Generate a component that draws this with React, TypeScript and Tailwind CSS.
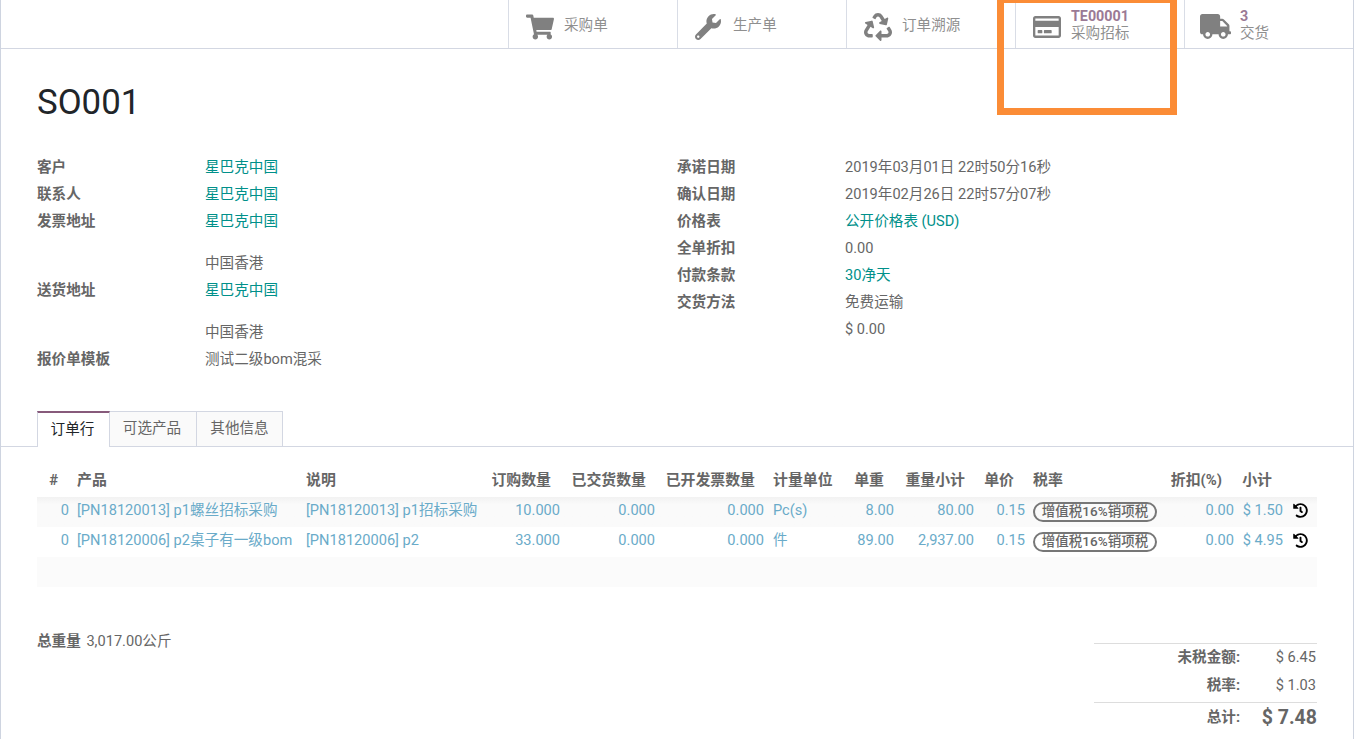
import { FaShoppingCart, FaWrench, FaRecycle, FaTruck, FaRegCreditCard, FaHistory } from "react-icons/fa";
import type { ReactNode } from "react";

const font = { fontFamily: 'Roboto, "Noto Sans CJK SC", sans-serif' };

function StatButton({ icon, label, top, className = "" }: { icon: ReactNode; label: string; top?: string; className?: string }) {
  return (
    <div className={"flex h-12 w-[169px] items-center border-l border-[#d9dde6] pl-[17px] text-[#8f8f8f] " + className}>
      <div className="flex w-[38px] shrink-0 items-center pt-[5px] text-[#808080]">{icon}</div>
      <div className={top ? "pt-[2px] leading-[17px]" : "pt-[3px] leading-[17px]"}>
        {top && <div className="text-[14.3px] font-bold text-[#9b7a95]">{top}</div>}
        <div>{label}</div>
      </div>
    </div>
  );
}

function Field({ label, value, link, extra }: { label?: string; value: string; link?: boolean; extra?: boolean }) {
  return (
    <div className={"flex items-center " + (extra ? "h-[42px] pt-[15px]" : "h-[27px]")}>
      <div className="w-[168px] shrink-0 font-bold text-[#666666]">{label}</div>
      <div className={link ? "text-[#00908a]" : "text-[#666666]"}>{value}</div>
    </div>
  );
}

const cols = [36, 229, 180, 82, 95, 109, 82, 48, 80, 51, 133, 76, 49, 30];

const rows = [
  { p: "[PN18120013] p1螺丝招标采购", d: "[PN18120013] p1招标采购", q: "10.000", u: "Pc(s)", w: "8.00", ws: "80.00", s: "$ 1.50", bg: "bg-gradient-to-b from-[#f2f2f2] to-[#fafafa] to-[25%]" },
  { p: "[PN18120006] p2桌子有一级bom", d: "[PN18120006] p2", q: "33.000", u: "件", w: "89.00", ws: "2,937.00", s: "$ 4.95", bg: "bg-white" },
];

export default function App() {
  return (
    <div style={font} className="relative h-[739px] overflow-hidden border-x border-[#ced4e0] bg-white text-[14.6px] text-[#666666]">
      <div className="flex h-[49px] justify-end border-b border-[#d3d7e2]">
        <StatButton icon={<FaShoppingCart size={28} />} label="采购单" />
        <StatButton icon={<FaWrench size={26} />} label="生产单" />
        <StatButton icon={<FaRecycle size={28} />} label="订单溯源" />
        <StatButton icon={<FaRegCreditCard size={28} />} label="采购招标" top="TE00001" />
        <StatButton icon={<FaTruck size={31} className="-ml-[2px]" />} label="交货" top="3" />
      </div>
      <div className="absolute left-[996px] top-0 h-[115px] w-[180px] border-[7px] border-t-[3px] border-[#fb8c36]" />

      <div className="px-9">
        <h1 className="mt-[32px] h-[73px] text-[34.8px] leading-[42px] text-[#212529]">SO001</h1>
        <div className="flex">
          <div className="w-[640px]">
            <Field label="客户" value="星巴克中国" link />
            <Field label="联系人" value="星巴克中国" link />
            <Field label="发票地址" value="星巴克中国" link />
            <Field value="中国香港" extra />
            <Field label="送货地址" value="星巴克中国" link />
            <Field value="中国香港" extra />
            <Field label="报价单模板" value="测试二级bom混采" />
          </div>
          <div>
            <Field label="承诺日期" value="2019年03月01日 22时50分16秒" />
            <Field label="确认日期" value="2019年02月26日 22时57分07秒" />
            <Field label="价格表" value="公开价格表 (USD)" link />
            <Field label="全单折扣" value="0.00" />
            <Field label="付款条款" value="30净天" link />
            <Field label="交货方法" value="免费运输" />
            <Field value="$ 0.00" />
          </div>
        </div>
      </div>

      <div className="mt-[38px] flex h-9 border-b border-[#d3d7e2] pl-9">
        <div className="flex h-9 w-[73px] items-center justify-center border-x border-t-2 border-[#d3d7e2] border-t-[#875a7b] bg-white pr-[2px] text-[#212529]">订单行</div>
        <div className="flex h-[35px] w-[87px] items-center justify-center border-r border-t border-[#d3d7e2] bg-[#fafafa] pr-[2px]">可选产品</div>
        <div className="flex h-[35px] w-[86px] items-center justify-center border-r border-t border-[#d3d7e2] bg-[#fafafa]">其他信息</div>
      </div>

      <div className="mt-[18px] px-9">
        <table className="w-[1280px] table-fixed border-collapse">
          <colgroup>
            {cols.map((w, i) => (
              <col key={i} style={{ width: w }} />
            ))}
          </colgroup>
          <thead>
            <tr className="h-[32px] text-[14.9px] font-bold [&>th]:px-1 [&>th]:pb-[2px] [&>th]:font-bold [&>th]:whitespace-nowrap">
              <th className="text-right"><span className="pr-[11px]">#</span></th>
              <th className="text-left">产品</th>
              <th className="text-left">说明</th>
              <th className="text-right"><span className="pr-[9px]">订购数量</span></th>
              <th className="text-right"><span className="pr-[9px]">已交货数量</span></th>
              <th className="text-right"><span className="pr-[9px]">已开发票数量</span></th>
              <th className="text-left"><span className="pl-px">计量单位</span></th>
              <th className="text-right"><span className="pr-[10px]">单重</span></th>
              <th className="text-right"><span className="pr-[9px]">重量小计</span></th>
              <th className="text-right"><span className="pr-[11px]">单价</span></th>
              <th className="text-left">税率</th>
              <th className="text-right"><span className="pr-[12px]">折扣(%)</span></th>
              <th className="text-right"><span className="pr-[11px]">小计</span></th>
              <th />
            </tr>
          </thead>
          <tbody>
            {rows.map((r) => (
              <tr key={r.p} className={"h-[30px] text-[#6aabc9] [&>td]:px-1 [&>td]:whitespace-nowrap " + r.bg}>
                <td className="pb-[2px] text-right">0</td>
                <td className="pb-[2px]">{r.p}</td>
                <td className="pb-[2px]">{r.d}</td>
                <td className="pb-[2px] text-right">{r.q}</td>
                <td className="pb-[2px] text-right">0.000</td>
                <td className="pb-[2px] text-right">0.000</td>
                <td className="pb-[2px]"><span className="pl-px">{r.u}</span></td>
                <td className="pb-[2px] text-right">{r.w}</td>
                <td className="pb-[2px] text-right">{r.ws}</td>
                <td className="pb-[2px] text-right">0.15</td>
                <td>
                  <span className="inline-flex h-[20px] w-[124px] items-center justify-center rounded-full border-[2px] border-[#777777] text-[13.5px] font-medium leading-none text-[#666666]">增值税16%销项税</span>
                </td>
                <td className="pb-[2px] text-right">0.00</td>
                <td className="pb-[2px] text-right">{r.s}</td>
                <td className="pb-[3px]"><FaHistory size={15} className="ml-[2px] block text-black" /></td>
              </tr>
            ))}
            <tr className="h-[30px] bg-[#fbfbfb]">
              <td colSpan={14} />
            </tr>
          </tbody>
        </table>

        <div className="mt-[44px] flex justify-between">
          <div className="leading-[20px]">
            <span className="mr-[2px] font-bold">总重量</span> 3,017.00公斤
          </div>
          <div className="mt-[12px] w-[223px]">
            <div className="border-t border-[#dddddd]">
              <div className="flex h-[27px] items-center pt-[1px]">
                <div className="w-[146px] text-right font-bold">未税金额:</div>
                <div className="flex-1 pr-px text-right">$ 6.45</div>
              </div>
              <div className="flex h-[27px] items-center pt-[3px]">
                <div className="w-[146px] text-right font-bold">税率:</div>
                <div className="flex-1 pr-px text-right">$ 1.03</div>
              </div>
            </div>
            <div className="mt-[4px] flex h-[30px] items-center border-t border-[#dddddd] pt-[1px]">
              <div className="w-[146px] text-right font-bold">总计:</div>
              <div className="flex-1 text-right text-[19.5px] font-bold">$ 7.48</div>
            </div>
          </div>
        </div>
      </div>
    </div>
  );
}
